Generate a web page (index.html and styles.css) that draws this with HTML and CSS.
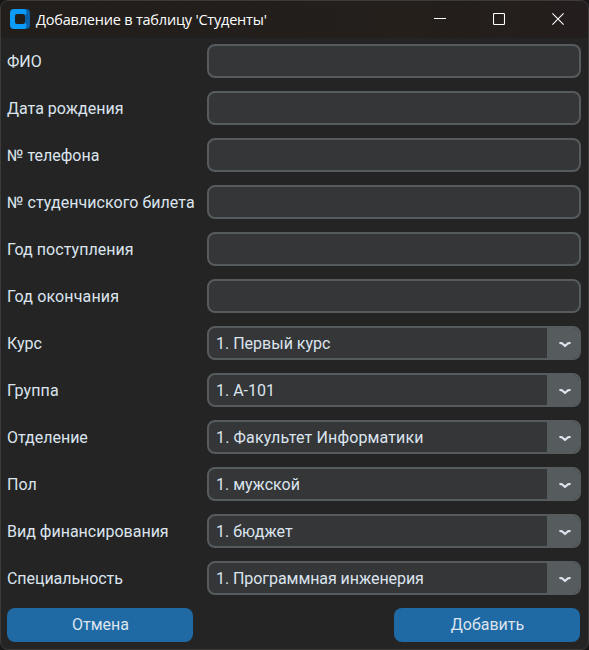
FILE: index.html
```html
<!DOCTYPE html>
<html lang="ru">
<head>
<meta charset="utf-8">
<title>Добавление в таблицу 'Студенты'</title>
<link rel="stylesheet" href="styles.css">
</head>
<body>
<div class="window">
  <header class="titlebar">
    <svg class="logo" width="20" height="20" viewBox="0 0 20 20">
      <path d="M14 0h2q4 0 4 4v12q0 4-4 4h-2z" fill="#0860a8"/>
      <path d="M4 0H15L16.500 2V4.500L15 6V14L16.500 15.500V18L15 20H4Q0 20 0 16V4Q0 0 4 0Z" fill="#0a9bfb"/>
      <path d="M7 5H13Q15 5 15 7V13Q15 15 13 15H7Q5 15 5 13V7Q5 5 7 5Z" fill="#211e1c"/>
    </svg>
    <h1 class="title">Добавление в таблицу 'Студенты'</h1>
    <div class="controls">
      <svg width="12" height="12" viewBox="0 0 12 12"><path d="M0 5.5h12"/></svg>
      <svg width="12" height="12" viewBox="0 0 12 12"><rect x=".5" y=".5" width="11" height="11" rx="1"/></svg>
      <svg width="12" height="12" viewBox="0 0 12 12"><path d="M.4.4l11.2 11.2M11.6.4L.4 11.6"/></svg>
    </div>
  </header>
  <form class="form">
    <div class="row"><span class="label">ФИО</span><div class="field"></div></div>
    <div class="row"><span class="label">Дата рождения</span><div class="field"></div></div>
    <div class="row"><span class="label">№ телефона</span><div class="field"></div></div>
    <div class="row"><span class="label wide">№ студенчиского билета</span><div class="field"></div></div>
    <div class="row"><span class="label wide">Год поступления</span><div class="field"></div></div>
    <div class="row"><span class="label wider">Год окончания</span><div class="field"></div></div>
    <div class="row"><span class="label">Курс</span><div class="field select"><span class="value">1. Первый курс</span><span class="arrow"><svg width="14" height="8" viewBox="0 0 14 8"><path d="M2.200 2L4 2.300L7 5L10 2.300L11.800 2"/></svg></span></div></div>
    <div class="row"><span class="label wider">Группа</span><div class="field select"><span class="value">1. А-101</span><span class="arrow"><svg width="14" height="8" viewBox="0 0 14 8"><path d="M2.200 2L4 2.300L7 5L10 2.300L11.800 2"/></svg></span></div></div>
    <div class="row"><span class="label">Отделение</span><div class="field select"><span class="value wider">1. Факультет Информатики</span><span class="arrow"><svg width="14" height="8" viewBox="0 0 14 8"><path d="M2.200 2L4 2.300L7 5L10 2.300L11.800 2"/></svg></span></div></div>
    <div class="row"><span class="label">Пол</span><div class="field select"><span class="value">1. мужской</span><span class="arrow"><svg width="14" height="8" viewBox="0 0 14 8"><path d="M2.200 2L4 2.300L7 5L10 2.300L11.800 2"/></svg></span></div></div>
    <div class="row"><span class="label">Вид финансирования</span><div class="field select"><span class="value">1. бюджет</span><span class="arrow"><svg width="14" height="8" viewBox="0 0 14 8"><path d="M2.200 2L4 2.300L7 5L10 2.300L11.800 2"/></svg></span></div></div>
    <div class="row"><span class="label tight">Специальность</span><div class="field select"><span class="value tight">1. Программная инженерия</span><span class="arrow"><svg width="14" height="8" viewBox="0 0 14 8"><path d="M2.200 2L4 2.300L7 5L10 2.300L11.800 2"/></svg></span></div></div>
    <div class="actions">
      <button type="button" class="button">Отмена</button>
      <button type="button" class="button">Добавить</button>
    </div>
  </form>
</div>
</body>
</html>
```
FILE: styles.css
```css
* { box-sizing: border-box; }
body {
  margin: 0;
  height: 650px;
  background: #171717;
  font-family: Roboto, sans-serif;
  font-size: 16px;
  color: #dce4ee;
  overflow: hidden;
}
.window {
  width: 589px;
  height: 650px;
  border: 1px solid #3c3b3a;
  border-radius: 8px;
  background: #242424;
  overflow: hidden;
}
.titlebar {
  display: flex;
  align-items: center;
  height: 37px;
  padding: 0 24px 0 9px;
  background: linear-gradient(90deg, #211e1c, #241f1b 70%, #241d1d);
}
.logo {
  flex: none;
  margin-top: -1px;
}
.title {
  margin: 0 0 0 6px;
  font: 400 14.5px/20px "Open Sans", "Noto Sans", sans-serif;
  color: #fff;
  letter-spacing: -0.2px;
  white-space: nowrap;
}
.controls {
  display: flex;
  gap: 47px;
  margin: -2px 0 0 auto;
}
.controls svg {
  fill: none;
  stroke: #fff;
  stroke-width: 1.1;
}
.form {
  display: flex;
  flex-direction: column;
  gap: 13px;
  padding: 6px 7px 0 6px;
}
.row {
  display: grid;
  grid-template-columns: 200px 374px;
  height: 34px;
  align-items: center;
}
.label {
  white-space: nowrap;
}
.wide { letter-spacing: 0.05px; }
.wider { letter-spacing: 0.14px; }
.tight { letter-spacing: -0.06px; }
.field {
  height: 34px;
  border: 2px solid #565b5e;
  border-radius: 8px;
  background: #343638;
}
.select {
  display: flex;
  align-items: stretch;
  justify-content: space-between;
  overflow: hidden;
}
.value {
  padding-left: 7px;
  line-height: 32px;
  white-space: nowrap;
}
.arrow {
  display: flex;
  align-items: center;
  justify-content: center;
  width: 32px;
  padding: 3px 0 0 4px;
  background: #565b5e;
}
.arrow svg {
  fill: none;
  stroke: #dce4ee;
  stroke-width: 2.2;
  stroke-linecap: round;
  stroke-linejoin: round;
}
.actions {
  display: flex;
  justify-content: space-between;
  width: 573px;
}
.button {
  width: 186px;
  height: 34px;
  padding: 0 0 2px 1px;
  border: 0;
  border-radius: 8px;
  background: #1f6aa5;
  color: #dce4ee;
  font: inherit;
}
```
